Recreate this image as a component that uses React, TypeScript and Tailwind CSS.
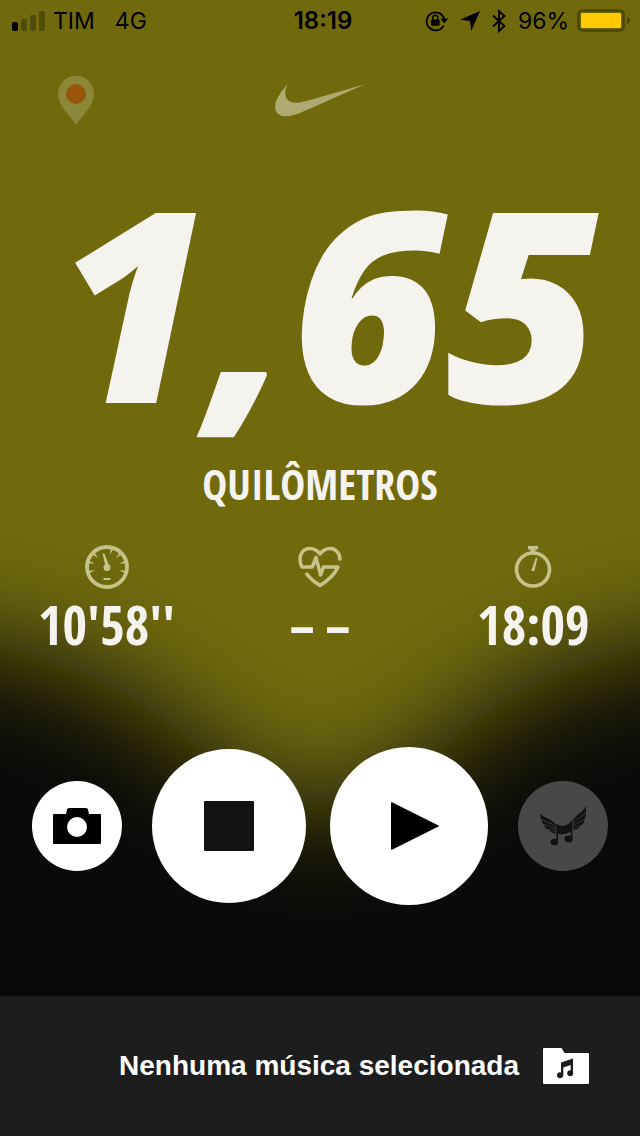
import type { ReactNode } from "react";

function Backdrop() {
  return (
    <svg
      aria-hidden="true"
      className="absolute inset-0 h-full w-full"
      viewBox="0 0 640 996"
      preserveAspectRatio="none"
    >
      <defs>
        <filter id="soft" filterUnits="userSpaceOnUse" x="-400" y="-400" width="1440" height="1700">
          <feGaussianBlur stdDeviation="56" />
        </filter>
      </defs>
      <rect width="640" height="996" fill="#0a0a0a" />
      <path
        filter="url(#soft)"
        fill="#6f6b0a"
        d="M-300 -300H940V620L640 646C560 668 500 698 450 740C400 785 355 812 320 812C285 812 240 785 190 740C140 698 80 668 0 646L-300 620Z"
      />
    </svg>
  );
}

function SignalBars() {
  return (
    <svg aria-hidden="true" width="33" height="20" viewBox="0 0 33 20">
      <rect x="0" y="11" width="6" height="9" rx="2" fill="#000" />
      <g fill="#4f4b08">
        <rect x="9" y="8" width="6" height="12" rx="2" />
        <rect x="18" y="4" width="6" height="16" rx="2" />
        <rect x="27" y="0" width="6" height="20" rx="2" />
      </g>
    </svg>
  );
}

function RotationLock() {
  return (
    <svg aria-hidden="true" width="23" height="22" viewBox="0 0 23 22">
      <path d="M18.6 15.6A9 9 0 1 1 19.2 8.6" fill="none" stroke="#000" strokeWidth="1.8" />
      <path d="M15.6 8.6H23L19.3 13.4Z" />
      <rect x="6" y="9.4" width="8.6" height="6.4" rx="1" />
      <path d="M7.9 10V7.6a2.4 2.4 0 0 1 4.8 0V10" fill="none" stroke="#000" strokeWidth="1.5" />
    </svg>
  );
}

function LocationArrow() {
  return (
    <svg aria-hidden="true" width="20" height="20" viewBox="0 0 20 20">
      <path d="M20 0L11.2 20L10 10L0 8.8Z" />
    </svg>
  );
}

function Bluetooth() {
  return (
    <svg aria-hidden="true" width="14" height="24" viewBox="0 0 14 24">
      <path
        d="M1 6.5L12.4 17L7 22V2L12.4 7L1 17.5"
        fill="none"
        stroke="#000"
        strokeWidth="1.9"
      />
    </svg>
  );
}

function Battery() {
  return (
    <svg aria-hidden="true" width="53" height="24" viewBox="0 0 53 24">
      <rect x="1.5" y="1.5" width="45" height="20" rx="4" fill="none" stroke="#4b4707" strokeWidth="2.6" />
      <rect x="4" y="4" width="40" height="15" rx="1.5" fill="#ffcb00" />
      <path d="M50 8C52 8.600 53 10 53 11.500S52 14.400 50 15Z" fill="#4b4707" />
    </svg>
  );
}

function StatusBar() {
  return (
    <div className="grid h-[41px] grid-cols-[1fr_auto_1fr] items-center pl-3 pr-[10px] text-[23px] leading-7 text-black [font-family:Inter,sans-serif]">
      <div className="flex items-center gap-2">
        <SignalBars />
        <span>TIM</span>
        <span className="pl-3">4G</span>
      </div>
      <span className="pl-1 text-2xl font-semibold">18:19</span>
      <div className="flex items-center justify-end gap-3">
        <RotationLock />
        <LocationArrow />
        <Bluetooth />
        <div className="flex items-center gap-2">
          <span>96%</span>
          <Battery />
        </div>
      </div>
    </div>
  );
}

function Pin() {
  return (
    <svg aria-hidden="true" width="36" height="48" viewBox="0 0 36 48">
      <path d="M18 0A18 18 0 0 1 36 18C36 28 28 36 18 48.500C8 36 0 28 0 18A18 18 0 0 1 18 0Z" fill="#8c8839" />
      <circle cx="18" cy="18" r="10" fill="#98560b" />
    </svg>
  );
}

function Swoosh() {
  return (
    <svg aria-hidden="true" width="90" height="33" viewBox="0 0 90 33">
      <path
        d="M12.500 0C8.500 9 9.500 18.800 20.500 18.800C24.500 18.800 29 17.600 34 16.200L90 0.300L29 27.200C21.500 30.500 16 32.300 11 32.300C3 32.300 -0.300 27.500 0.200 21.500C0.800 14.500 7.500 6 12.500 0Z"
        fill="#aeaa72"
      />
    </svg>
  );
}

function Gauge() {
  const ticks = [-105, -75, -45, 15, 45, 75, 105];
  return (
    <svg aria-hidden="true" width="44" height="44" viewBox="0 0 44 44" fill="#c7c289">
      <circle cx="22" cy="22" r="20" fill="none" stroke="#c7c289" strokeWidth="3.8" />
      {ticks.map((angle) => (
        <path key={angle} d="M20.700 3L22 9.600L23.300 3Z" transform={`rotate(${angle} 22 22)`} />
      ))}
      <path d="M17.600 8.500L19.200 8L24 20.500L20.500 21.500Z" />
      <circle cx="22" cy="22.500" r="3.500" />
      <rect x="18.500" y="33" width="7" height="2" rx="0.500" />
    </svg>
  );
}

function HeartPulse() {
  return (
    <svg aria-hidden="true" width="44" height="44" viewBox="0 0 44 44" fill="none" stroke="#c7c289" strokeWidth="3.5">
      <path d="M42 15.500C42 8 37.500 3.500 32.500 3.500C28 3.500 24.500 5.500 22 9C19.500 5.500 16 3.500 11.500 3.500C6 3.500 2 8 2 14.500C2 17.500 2.800 19.800 4 22H14.300L18 12.500L22.600 30L25.500 22H40C36.500 30 30 35.500 22 40.500C16 36.800 11.500 33 8 28" strokeLinejoin="round" />
    </svg>
  );
}

function Stopwatch() {
  return (
    <svg aria-hidden="true" width="44" height="44" viewBox="0 0 44 44" fill="#c7c289">
      <circle cx="22" cy="24.500" r="16.500" fill="none" stroke="#c7c289" strokeWidth="3.600" />
      <path d="M17 1H27V4.500H24.500V7.500H19.500V4.500H17Z" />
      <path d="M24.800 12.500L26.400 13L23.500 26H20.200Z" />
    </svg>
  );
}

function Metric({ label, icon, value }: { label: string; icon: ReactNode; value: string }) {
  return (
    <div className="flex flex-col items-center gap-2" aria-label={label}>
      {icon}
      <span className="text-[53px] leading-[56px]">{value}</span>
    </div>
  );
}

function Camera() {
  return (
    <svg aria-hidden="true" width="48" height="36" viewBox="0 0 48 36">
      <path
        fillRule="evenodd"
        d="M1 6H13L14 1.500Q14.400 0 16 0H33Q34.600 0 35 1.500L36 6H47Q48 6 48 7V35Q48 36 47 36H1Q0 36 0 35V7Q0 6 1 6ZM24 9A10 10 0 1 0 24 29A10 10 0 1 0 24 9Z"
      />
    </svg>
  );
}

function WingedNotes() {
  return (
    <svg aria-hidden="true" width="46" height="40" viewBox="0 0 46 40" fill="#121212">
      <path d="M0 8C4 11.500 11 12.500 16 18.500V27.500C12 27 9.500 25.500 8.800 23.800C6 22.800 4.300 21 4.200 19C2.200 17.500 1.200 15.500 1.600 13.500C0.400 12 -0.200 10 0 8Z" />
      <path d="M46 0C43 6 36 8.500 33 14.500V24C37 23.500 40 21.800 41 19.500C43.500 18 44.600 15.500 44.300 13.300C45.800 11.300 46.300 9 45.600 7C46.300 4.500 46.300 2 46 0Z" />
      <path d="M17 18.500C22.500 20.800 27.500 20 32 15V24.500C27.500 28.300 22.500 29 17 27.500Z" />
      <g fill="none" stroke="#484848" strokeWidth="0.700">
        <path d="M1.500 13.300C6 16.300 11 16.300 15 20.200" />
        <path d="M4 18.500C8 20.500 11.500 20 15.500 23" />
        <path d="M8.500 23.300C11 24.300 13 24 15.500 25.500" />
        <path d="M45.600 6.800C42 11.200 37.500 11.700 34 16.500" />
        <path d="M44.300 13C41 16 37.500 16 34 19.500" />
        <path d="M41 19.300C38.500 20.800 36.500 20.500 34 22.500" />
        <path d="M16 18V30M33 14V26" />
      </g>
      <path d="M16.400 18H18V35.500H16.400ZM30.800 14.500H32.400V32.500H30.800Z" />
      <ellipse cx="14.300" cy="36" rx="3.900" ry="3.300" />
      <ellipse cx="28.700" cy="33" rx="4.100" ry="3.400" />
    </svg>
  );
}

function MusicFolder() {
  return (
    <svg aria-hidden="true" width="46" height="36" viewBox="0 0 46 36">
      <path d="M1 0H18.500L21.500 5H45Q46 5 46 6V35Q46 36 45 36H1Q0 36 0 35V1Q0 0 1 0Z" fill="#fff" />
      <g fill="#1d1d1d">
        <path d="M18 14.500L30 10.500V25.500H27.700V17L20.300 19.500V28H18Z" />
        <circle cx="17" cy="27.200" r="3" />
        <circle cx="27.200" cy="25.200" r="3" />
      </g>
    </svg>
  );
}

export default function App() {
  return (
    <div className="flex min-h-screen flex-col bg-[#0a0a0a]">
      <main className="relative isolate flex grow flex-col text-[#f5f3ee]">
        <div className="absolute inset-0 -z-10 overflow-hidden">
          <Backdrop />
        </div>

        <StatusBar />

        <header className="grid grid-cols-3 items-start pt-[35px]">
          <div className="pl-[58px]">
            <Pin />
          </div>
          <div className="flex justify-center pt-2">
            <Swoosh />
          </div>
        </header>

        <section className="font-bold [font-family:'Open_Sans_Condensed','Open_Sans',sans-serif]">
          <p className="pr-10 pt-12 text-right text-[266px] font-extrabold italic leading-[256px] [font-family:'Open_Sans',sans-serif]">
            1,65
          </p>
          <h1 className="pt-7 text-center text-[42px] leading-[56px]">QUILÔMETROS</h1>
          <div className="grid grid-cols-3 pt-[33px]">
            <Metric label="Ritmo" icon={<Gauge />} value="10'58''" />
            <Metric label="Frequência cardíaca" icon={<HeartPulse />} value={"–\u2009–"} />
            <Metric label="Duração" icon={<Stopwatch />} value="18:09" />
          </div>
        </section>

        <div className="flex items-center justify-between px-8 pb-[90px] pt-[94px]">
          <button
            type="button"
            aria-label="Câmera"
            className="flex size-[90px] items-center justify-center rounded-full bg-white"
          >
            <Camera />
          </button>
          <div className="flex items-center gap-6">
            <button
              type="button"
              aria-label="Parar"
              className="flex size-[154px] items-center justify-center rounded-full bg-white"
            >
              <span className="size-[50px] rounded-[1px] bg-[#121212]" />
            </button>
            <button
              type="button"
              aria-label="Continuar"
              className="flex size-[158px] items-center justify-center rounded-full bg-white"
            >
              <svg aria-hidden="true" width="60" height="48" viewBox="0 0 60 48">
                <path d="M12 1Q12 0 13 0.300L59.500 23.400Q60.200 24 59.500 24.600L13 47.700Q12 48 12 47Z" />
              </svg>
            </button>
          </div>
          <button
            type="button"
            aria-label="Música"
            className="flex size-[90px] items-center justify-center rounded-full bg-[#484847]"
          >
            <WingedNotes />
          </button>
        </div>
      </main>

      <footer className="bg-[#1d1d1d] text-white">
        <button
          type="button"
          className="flex h-[140px] w-full items-center justify-end gap-6 pr-[51px] text-[28px] font-bold leading-9 [font-family:'Liberation_Sans',sans-serif]"
        >
          <span>Nenhuma música selecionada</span>
          <MusicFolder />
        </button>
      </footer>
    </div>
  );
}
